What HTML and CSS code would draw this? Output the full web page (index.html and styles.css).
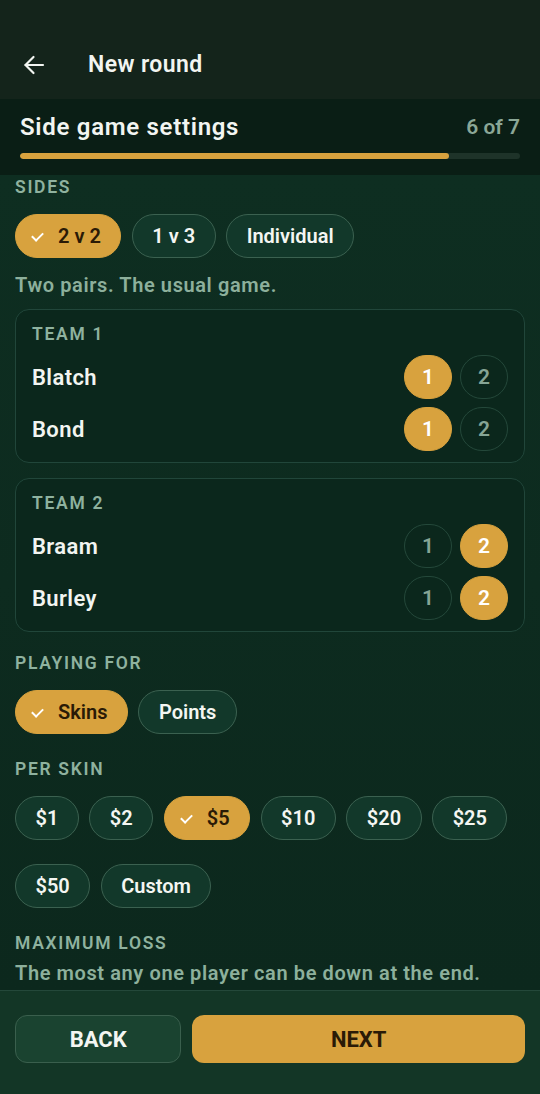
FILE: index.html
```html
<!DOCTYPE html>
<html lang="en">
<head>
    <meta charset="UTF-8">
    <meta name="viewport" content="width=device-width, initial-scale=1.0">
    <title>New round</title>
    <link rel="stylesheet" href="styles.css">
</head>
<body>
    <header class="appbar">
        <button class="icon-btn" aria-label="Back">
            <svg width="22" height="22" viewBox="0 0 22 22" fill="none" stroke="currentColor" stroke-width="2.2" stroke-linecap="round" stroke-linejoin="round">
                <path d="M20 11H2.5"/>
                <path d="M10.5 3L2.5 11L10.5 19"/>
            </svg>
        </button>
        <h1>New round</h1>
    </header>

    <div class="stephead">
        <div class="step-row">
            <h2>Side game settings</h2>
            <span class="step-count">6 of 7</span>
        </div>
        <div class="progress"><div class="progress-fill" style="width: 85.7%"></div></div>
    </div>

    <main>
        <!-- Sides -->
        <section class="block">
            <h3 class="label">Sides</h3>
            <div class="chips">
                <button class="chip selected"><span class="check"></span>2 v 2</button>
                <button class="chip">1 v 3</button>
                <button class="chip">Individual</button>
            </div>
            <p class="hint">Two pairs. The usual game.</p>
        </section>

        <div class="team-card">
            <h4 class="label">Team 1</h4>
            <div class="player">
                <span class="name">Blatch</span>
                <div class="picks"><span class="pick on">1</span><span class="pick">2</span></div>
            </div>
            <div class="player">
                <span class="name">Bond</span>
                <div class="picks"><span class="pick on">1</span><span class="pick">2</span></div>
            </div>
        </div>

        <div class="team-card">
            <h4 class="label">Team 2</h4>
            <div class="player">
                <span class="name">Braam</span>
                <div class="picks"><span class="pick">1</span><span class="pick on">2</span></div>
            </div>
            <div class="player">
                <span class="name">Burley</span>
                <div class="picks"><span class="pick">1</span><span class="pick on">2</span></div>
            </div>
        </div>

        <!-- Playing for -->
        <section class="block spaced">
            <h3 class="label">Playing for</h3>
            <div class="chips">
                <button class="chip selected"><span class="check"></span>Skins</button>
                <button class="chip">Points</button>
            </div>
        </section>

        <!-- Per skin -->
        <section class="block">
            <h3 class="label">Per skin</h3>
            <div class="chips wrap">
                <button class="chip">$1</button>
                <button class="chip">$2</button>
                <button class="chip selected"><span class="check"></span>$5</button>
                <button class="chip">$10</button>
                <button class="chip">$20</button>
                <button class="chip">$25</button>
                <button class="chip">$50</button>
                <button class="chip">Custom</button>
            </div>
        </section>

        <!-- Maximum loss -->
        <section class="block">
            <h3 class="label">Maximum loss</h3>
            <p class="hint tight">The most any one player can be down at the end.</p>
        </section>
    </main>

    <footer class="actions">
        <button class="btn btn-back">BACK</button>
        <button class="btn btn-next">NEXT</button>
    </footer>
</body>
</html>
```

FILE: styles.css
```css
/* Base */
body {
    font-family: Roboto, 'Liberation Sans', sans-serif;
    margin: 0;
    width: 540px;
    height: 1094px;
    display: flex;
    flex-direction: column;
    background: #0d2a1f;
    color: #f2f5f1;
    overflow: hidden;
}

button {
    font-family: inherit;
    cursor: pointer;
}

h1, h2, h3, h4, p {
    margin: 0;
}

/* App bar */
.appbar {
    height: 69px;
    padding: 30px 0 0 23px;
    display: flex;
    align-items: center;
    background: #14241b;
}

.icon-btn {
    background: none;
    border: none;
    padding: 0;
    color: #f2f5f1;
    display: flex;
    width: 22px;
    height: 22px;
}

.appbar h1 {
    margin-left: 43px;
    font-size: 23px;
    font-weight: 600;
    letter-spacing: 0.4px;
}

/* Step header */
.stephead {
    padding: 12px 20px 16px;
    background: #0a1e15;
}

.step-row {
    display: flex;
    justify-content: space-between;
    align-items: center;
    height: 32px;
}

.step-row h2 {
    font-size: 24px;
    font-weight: 600;
    letter-spacing: 0.7px;
}

.step-count {
    font-size: 21px;
    font-weight: 600;
    color: #8ba797;
}

.progress {
    margin-top: 10px;
    height: 6px;
    border-radius: 3px;
    background: #1e3329;
    overflow: hidden;
}

.progress-fill {
    height: 100%;
    background: #d8a23e;
    border-radius: 3px;
}

/* Main */
main {
    flex: 1;
    overflow: hidden;
    padding: 2px 15px 0;
    background: linear-gradient(#0e2e21, #0c281d);
}

.label {
    font-size: 17.5px;
    line-height: 20px;
    font-weight: 600;
    letter-spacing: 1.7px;
    text-transform: uppercase;
    color: #8fb29f;
}

.block + .block {
    margin-top: 25px;
}

.block.spaced {
    margin-top: 21px;
}

.chips {
    display: flex;
    gap: 10.5px;
    margin-top: 17px;
}

.chips.wrap {
    flex-wrap: wrap;
    row-gap: 24px;
}

.chip {
    height: 44px;
    padding: 0 19.5px;
    border: 1px solid #3b6150;
    border-radius: 22px;
    background: #12382a;
    color: #f4f6f2;
    font-size: 20px;
    font-weight: 600;
    display: flex;
    align-items: center;
}

.chip.selected {
    padding-left: 12px;
    background: #d8a23e;
    border-color: #d8a23e;
    color: #2a1a06;
}

.check {
    width: 18px;
    height: 18px;
    margin-right: 12px;
    position: relative;
}

.check::after {
    content: '';
    position: absolute;
    left: 6px;
    top: 3px;
    width: 5px;
    height: 9px;
    border: solid #fff;
    border-width: 0 2px 2px 0;
    transform: rotate(45deg);
}

.hint {
    margin-top: 15px;
    font-size: 20px;
    line-height: 24px;
    font-weight: 600;
    letter-spacing: 0.6px;
    color: #8db09c;
}

.hint.tight {
    margin-top: 8px;
}

/* Teams */
.team-card {
    margin-top: 12px;
    padding: 14px 16px 11px;
    border: 1px solid #21463a;
    border-radius: 14px;
    background: #0b271c;
}

.team-card + .team-card {
    margin-top: 15px;
}

.team-card .label {
    margin-bottom: 11px;
}

.player {
    display: flex;
    justify-content: space-between;
    align-items: center;
    height: 44px;
}

.player + .player {
    margin-top: 8px;
}

.name {
    font-size: 22px;
    font-weight: 600;
    letter-spacing: 0.4px;
}

.picks {
    display: flex;
    gap: 8px;
}

.pick {
    width: 46px;
    height: 42px;
    border: 1px solid #24483a;
    border-radius: 22px;
    display: flex;
    align-items: center;
    justify-content: center;
    font-size: 21px;
    font-weight: 600;
    color: #86a595;
}

.pick.on {
    background: #d8a23e;
    border-color: #d8a23e;
    color: #fff;
}

/* Bottom actions */
.actions {
    display: grid;
    grid-template-columns: 1fr 2fr;
    gap: 11px;
    padding: 24px 15px 31px;
    border-top: 1px solid #24483a;
    background: #133626;
}

.btn {
    height: 48px;
    border-radius: 12px;
    font-size: 22px;
    font-weight: 700;
}

.btn-back {
    background: #1a4330;
    border: 1px solid #3a5f4d;
    color: #f4f6f2;
}

.btn-next {
    background: #d8a23e;
    border: none;
    color: #2a1a06;
}
```
